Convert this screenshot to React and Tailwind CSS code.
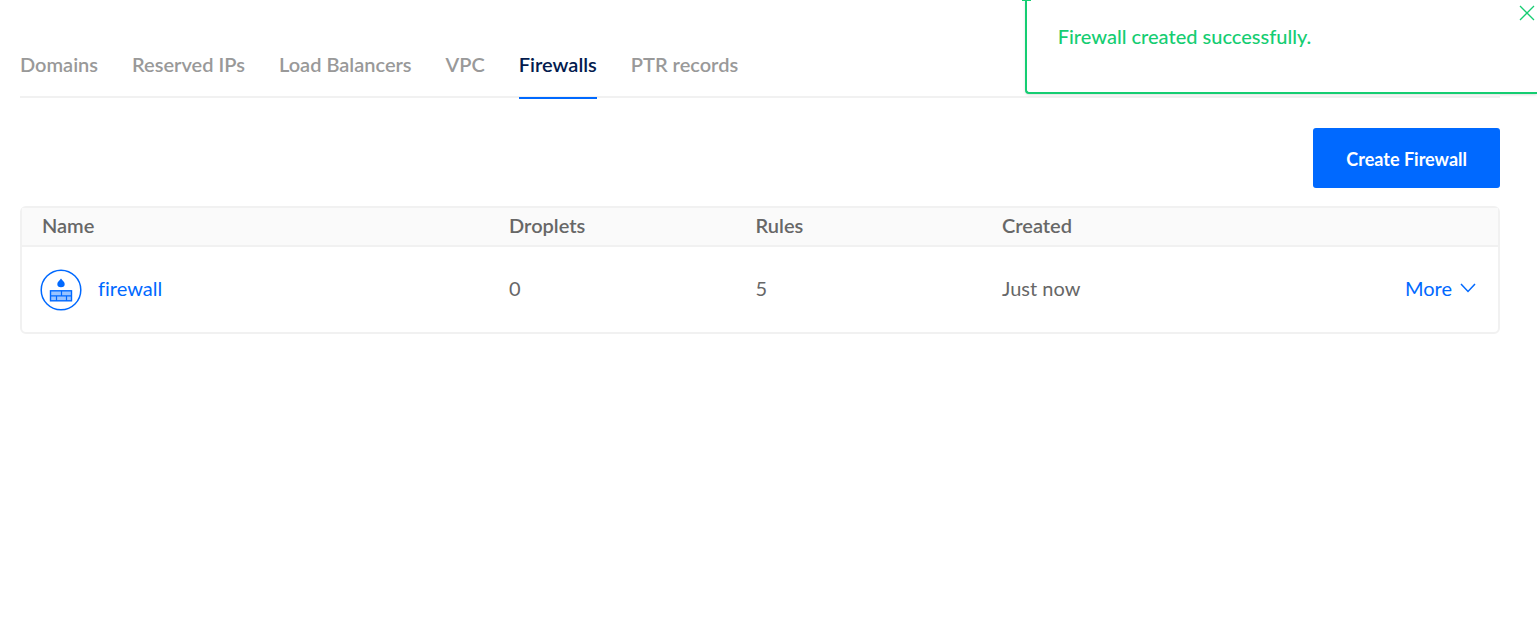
import React from "react";

const tabs = ["Domains", "Reserved IPs", "Load Balancers", "VPC", "Firewalls", "PTR records"];

function FirewallIcon() {
  return (
    <svg className="size-[42px] shrink-0" viewBox="0 0 42 42" fill="none" aria-hidden="true">
      <circle cx="21" cy="21" r="19.8" fill="#fff" stroke="#0069ff" strokeWidth="1.5" />
      <path d="M21 9.5C19.6 11.6 17.3 12.9 17.3 15a3.7 3.3 0 0 0 7.4 0C24.7 12.9 22.4 11.6 21 9.5Z" fill="#0069ff" />
      <rect x="10.5" y="21.8" width="21" height="10" fill="#99c3ff" stroke="#0069ff" strokeWidth="1.4" />
      <path d="M10.5 26.8h21M21.5 21.8v5M16.5 26.8v5M26.5 26.8v5" stroke="#0069ff" strokeWidth="1.2" />
    </svg>
  );
}

export default function App() {
  return (
    <div className="relative overflow-hidden bg-white px-5 pt-12 pb-10 font-['Lato',sans-serif] text-xl leading-8 text-[#676767] [font-variant-ligatures:none]">
      <nav className="mr-[17px] border-b-2 border-[#f1f1f1]">
        <ul className="flex gap-[34px]">
          {tabs.map((tab) => (
            <li key={tab} className="-mb-[3px]">
              <a
                href="#"
                aria-current={tab === "Firewalls" ? "page" : undefined}
                className={
                  tab === "Firewalls"
                    ? "block border-b-2 border-[#0069ff] pb-[17px] font-semibold text-[#031b4e]"
                    : "block border-b-2 border-transparent pb-[17px] font-semibold text-[#999]"
                }
              >
                {tab}
              </a>
            </li>
          ))}
        </ul>
      </nav>

      <main className="mr-[17px]">
        <div className="flex justify-end pt-[30px] pb-[18px]">
          <button type="button" className="h-[60px] rounded-[3px] bg-[#0069ff] px-[33px] pt-0.5 text-lg font-bold text-white">
            Create Firewall
          </button>
        </div>

        <div className="rounded-md border-2 border-[#f1f1f1]">
          <table className="w-full table-fixed text-left">
            <colgroup>
              <col className="w-[33%]" />
              <col className="w-[16.7%]" />
              <col className="w-[16.7%]" />
              <col className="w-[16.7%]" />
              <col />
            </colgroup>
            <thead className="bg-[#fafafa]">
              <tr className="h-[38px] border-b-2 border-[#f1f1f1] *:pb-1">
                <th className="pl-5 font-semibold">Name</th>
                <th className="font-semibold">Droplets</th>
                <th className="font-semibold">Rules</th>
                <th className="font-semibold">Created</th>
                <th aria-label="Actions" />
              </tr>
            </thead>
            <tbody>
              <tr className="h-[86px] *:pb-1">
                <td className="pl-[18px]">
                  <a href="#" className="flex items-center gap-4 text-[#0069ff]">
                    <span className="pt-1">
                      <FirewallIcon />
                    </span>
                    firewall
                  </a>
                </td>
                <td>0</td>
                <td>5</td>
                <td>Just now</td>
                <td className="pr-[22px]">
                  <button type="button" className="ml-auto flex items-center gap-2 text-[#0069ff]">
                    More
                    <svg className="h-[10px] w-4" viewBox="0 0 16 10" fill="none" stroke="currentColor" strokeWidth="1.5" aria-hidden="true">
                      <path d="M1 1l7 7.5L15 1" />
                    </svg>
                  </button>
                </td>
              </tr>
            </tbody>
          </table>
        </div>
      </main>

      <div role="status" className="absolute top-0 right-0 h-[94px] w-1/3 rounded-bl border-b-2 border-l-2 border-[#15cd72] bg-white pt-5 pl-[31px] font-medium text-[#15cd72] shadow-sm">
        <span className="absolute top-0 -left-[5px] h-px w-[9px] bg-[#15cd72]" />
        Firewall created successfully.
        <button type="button" aria-label="Close" className="absolute top-[5px] right-[2px]">
          <svg className="size-4" viewBox="0 0 16 16" fill="none" stroke="currentColor" strokeWidth="1.3" aria-hidden="true">
            <path d="M1 1l14 14M15 1L1 15" />
          </svg>
        </button>
      </div>
    </div>
  );
}
